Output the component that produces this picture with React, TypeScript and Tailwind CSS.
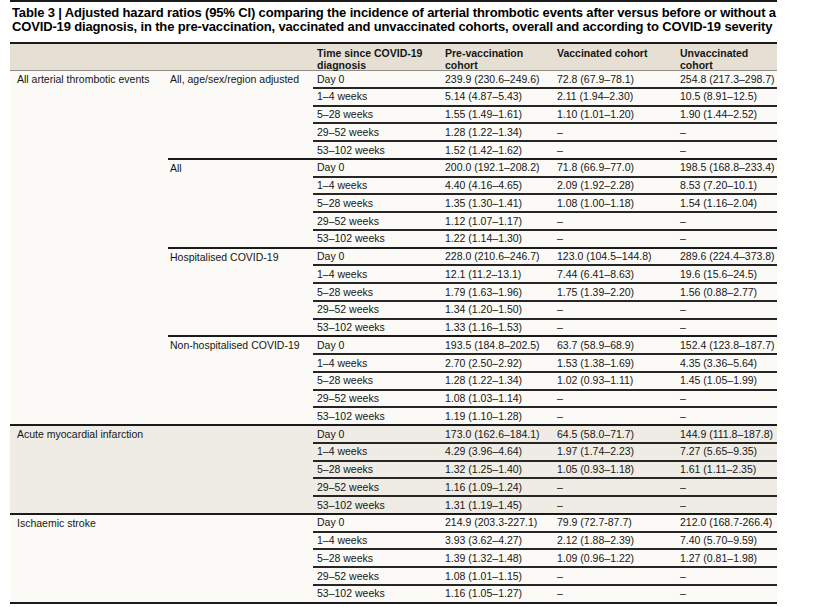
import React from "react";

type R = [string, string, string, string];
type Sub = { label: string; rows: R[] };
type Group = { label: string; bg: string; subs: Sub[] };

const T = ["Day 0", "1–4 weeks", "5–28 weeks", "29–52 weeks", "53–102 weeks"];
const mk = (vals: [string, string, string][]): R[] => vals.map((v, i) => [T[i], v[0], v[1], v[2]]);

const groups: Group[] = [
  {
    label: "All arterial thrombotic events",
    bg: "bg-[#fbfaf6]",
    subs: [
      {
        label: "All, age/sex/region adjusted",
        rows: mk([
          ["239.9 (230.6–249.6)", "72.8 (67.9–78.1)", "254.8 (217.3–298.7)"],
          ["5.14 (4.87–5.43)", "2.11 (1.94–2.30)", "10.5 (8.91–12.5)"],
          ["1.55 (1.49–1.61)", "1.10 (1.01–1.20)", "1.90 (1.44–2.52)"],
          ["1.28 (1.22–1.34)", "–", "–"],
          ["1.52 (1.42–1.62)", "–", "–"],
        ]),
      },
      {
        label: "All",
        rows: mk([
          ["200.0 (192.1–208.2)", "71.8 (66.9–77.0)", "198.5 (168.8–233.4)"],
          ["4.40 (4.16–4.65)", "2.09 (1.92–2.28)", "8.53 (7.20–10.1)"],
          ["1.35 (1.30–1.41)", "1.08 (1.00–1.18)", "1.54 (1.16–2.04)"],
          ["1.12 (1.07–1.17)", "–", "–"],
          ["1.22 (1.14–1.30)", "–", "–"],
        ]),
      },
      {
        label: "Hospitalised COVID-19",
        rows: mk([
          ["228.0 (210.6–246.7)", "123.0 (104.5–144.8)", "289.6 (224.4–373.8)"],
          ["12.1 (11.2–13.1)", "7.44 (6.41–8.63)", "19.6 (15.6–24.5)"],
          ["1.79 (1.63–1.96)", "1.75 (1.39–2.20)", "1.56 (0.88–2.77)"],
          ["1.34 (1.20–1.50)", "–", "–"],
          ["1.33 (1.16–1.53)", "–", "–"],
        ]),
      },
      {
        label: "Non-hospitalised COVID-19",
        rows: mk([
          ["193.5 (184.8–202.5)", "63.7 (58.9–68.9)", "152.4 (123.8–187.7)"],
          ["2.70 (2.50–2.92)", "1.53 (1.38–1.69)", "4.35 (3.36–5.64)"],
          ["1.28 (1.22–1.34)", "1.02 (0.93–1.11)", "1.45 (1.05–1.99)"],
          ["1.08 (1.03–1.14)", "–", "–"],
          ["1.19 (1.10–1.28)", "–", "–"],
        ]),
      },
    ],
  },
  {
    label: "Acute myocardial infarction",
    bg: "bg-[#efece5]",
    subs: [
      {
        label: "",
        rows: mk([
          ["173.0 (162.6–184.1)", "64.5 (58.0–71.7)", "144.9 (111.8–187.8)"],
          ["4.29 (3.96–4.64)", "1.97 (1.74–2.23)", "7.27 (5.65–9.35)"],
          ["1.32 (1.25–1.40)", "1.05 (0.93–1.18)", "1.61 (1.11–2.35)"],
          ["1.16 (1.09–1.24)", "–", "–"],
          ["1.31 (1.19–1.45)", "–", "–"],
        ]),
      },
    ],
  },
  {
    label: "Ischaemic stroke",
    bg: "bg-[#fbfaf6]",
    subs: [
      {
        label: "",
        rows: mk([
          ["214.9 (203.3-227.1)", "79.9 (72.7-87.7)", "212.0 (168.7-266.4)"],
          ["3.93 (3.62–4.27)", "2.12 (1.88–2.39)", "7.40 (5.70–9.59)"],
          ["1.39 (1.32–1.48)", "1.09 (0.96–1.22)", "1.27 (0.81–1.98)"],
          ["1.08 (1.01–1.15)", "–", "–"],
          ["1.16 (1.05–1.27)", "–", "–"],
        ]),
      },
    ],
  },
];

function Row({ r, first }: { r: R; first: boolean }) {
  return (
    <div
      className={`flex items-center pt-[1px] ${first ? "h-[15.75px]" : "h-[17.75px] border-t-2 border-[#262626]"}`}
    >
      <div className="w-[128px] pl-[4px] whitespace-nowrap">{r[0]}</div>
      <div className="w-[112px] pl-[4px] whitespace-nowrap">{r[1]}</div>
      <div className="w-[123px] pl-[4px] whitespace-nowrap">{r[2]}</div>
      <div className="flex-1 pl-[4px] whitespace-nowrap">{r[3]}</div>
    </div>
  );
}

export default function App() {
  return (
    <div
      className="w-[820px] h-[607px] bg-white overflow-hidden text-[#161616]"
      style={{ fontFamily: '"Liberation Sans", Arial, sans-serif' }}
    >
      <div className="ml-[10px] w-[767px]">
        <div className="border-t-2 border-[#1a1a1a] h-[42px] pt-[4px] pl-[2px]">
          <div className="text-[13px] font-bold leading-[13.5px] tracking-[-0.15px] text-black whitespace-nowrap">
            <div>
              Table 3 | Adjusted hazard ratios (95% CI) comparing the incidence of arterial thrombotic events after versus before or without a
            </div>
            <div>
              COVID-19 diagnosis, in the pre-vaccination, vaccinated and unvaccinated cohorts, overall and according to COVID-19 severity
            </div>
          </div>
        </div>
        <div className="border-t-2 border-[#1a1a1a]">
          <div className="flex h-[27px] bg-[#e5e0d3] border-b border-[#8f8c85] pt-[3px] text-[10.5px] font-bold leading-[12px]">
            <div className="w-[303px]" />
            <div className="w-[128px] pl-[4px]">
              Time since COVID-19
              <br />
              diagnosis
            </div>
            <div className="w-[112px] pl-[4px]">
              Pre-vaccination
              <br />
              cohort
            </div>
            <div className="w-[123px] pl-[4px]">Vaccinated cohort</div>
            <div className="flex-1 pl-[4px]">
              Unvaccinated
              <br />
              cohort
            </div>
          </div>
          <div className="text-[10.5px] border-b-2 border-[#1a1a1a]">
            {groups.map((g, gi) => (
              <div
                key={gi}
                className={`flex ${g.bg} ${gi > 0 ? "border-t-2 border-[#1a1a1a]" : ""}`}
              >
                <div className="w-[158px] pl-[7px] pt-[1px] leading-[15.75px] whitespace-nowrap">{g.label}</div>
                <div className="flex-1">
                  {g.subs.map((s, si) => (
                    <div key={si} className={`flex ${si > 0 ? "border-t-2 border-[#1a1a1a]" : ""}`}>
                      <div className="w-[145px] pl-[2px] pt-[1px] leading-[15.75px] whitespace-nowrap">{s.label}</div>
                      <div className="flex-1">
                        {s.rows.map((r, ri) => (
                          <Row key={ri} r={r} first={ri === 0} />
                        ))}
                      </div>
                    </div>
                  ))}
                </div>
              </div>
            ))}
          </div>
        </div>
      </div>
    </div>
  );
}
